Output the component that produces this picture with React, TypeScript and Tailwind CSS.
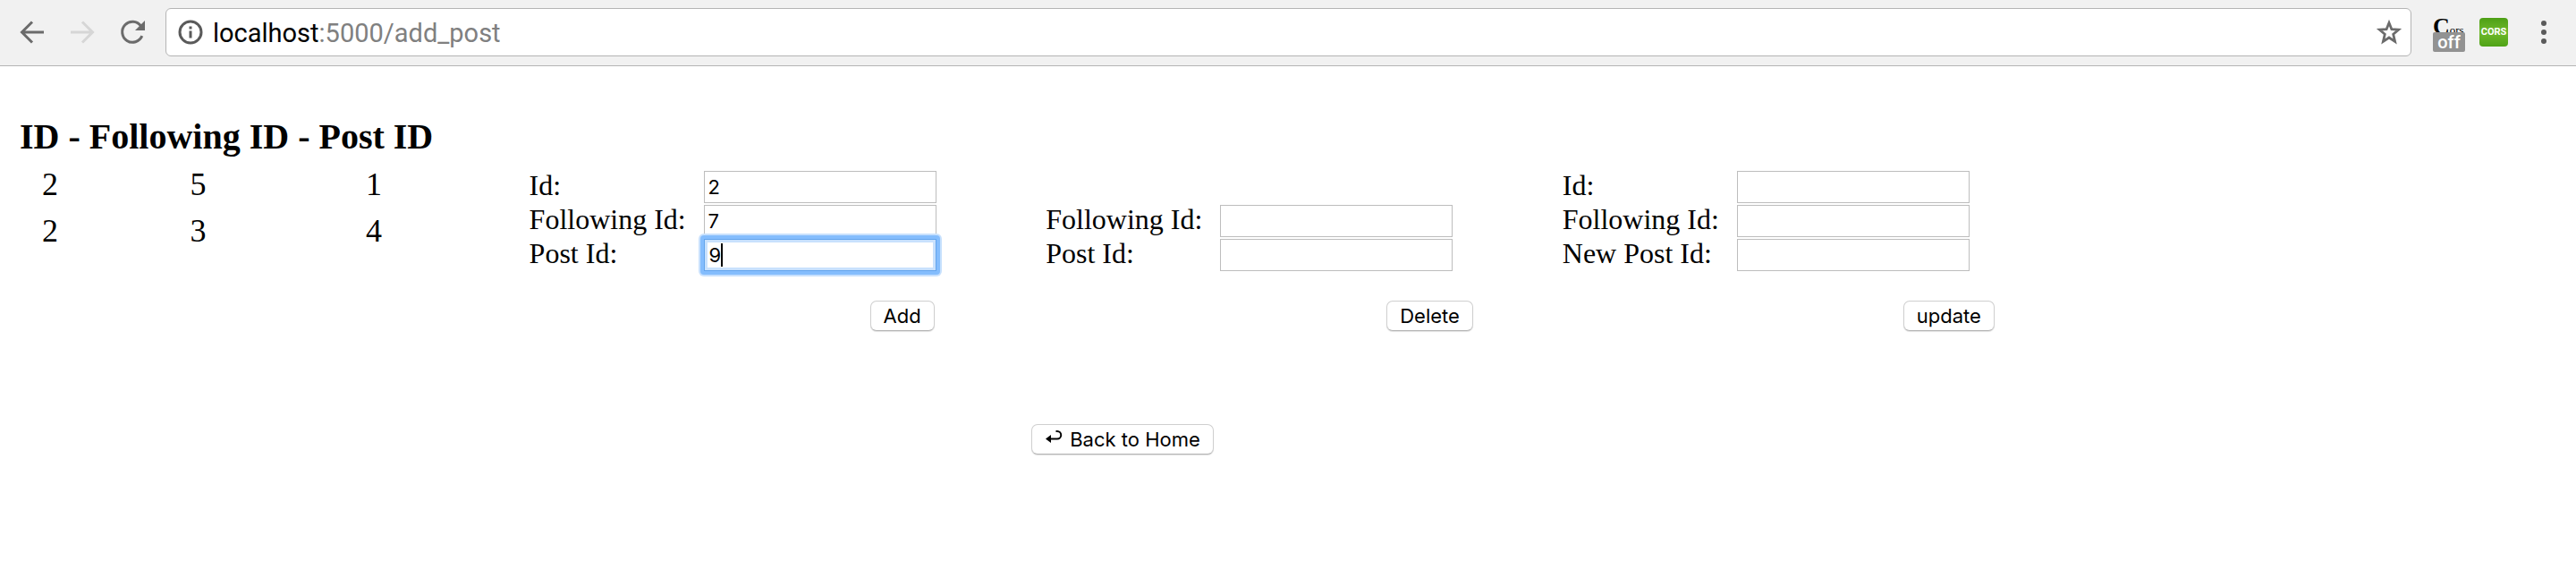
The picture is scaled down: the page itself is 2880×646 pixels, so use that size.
import React from "react";

type Field = { id: string; label: string; value?: string; focused?: boolean };

const rows = [
  [2, 5, 1],
  [2, 3, 4],
];

const addFields: Field[] = [
  { id: "add-id", label: "Id:", value: "2" },
  { id: "add-following", label: "Following Id:", value: "7" },
  { id: "add-post", label: "Post Id:", value: "9", focused: true },
];

const deleteFields: Field[] = [
  { id: "delete-following", label: "Following Id:" },
  { id: "delete-post", label: "Post Id:" },
];

const updateFields: Field[] = [
  { id: "update-id", label: "Id:" },
  { id: "update-following", label: "Following Id:" },
  { id: "update-post", label: "New Post Id:" },
];

const buttonClass =
  "flex h-[34px] items-center rounded-[7px] border border-[#cfcfcf] border-b-[#b4b4b4] bg-white px-[14px] font-[Inter,sans-serif] text-[22px] leading-8 text-black shadow-[0_1px_1px_rgba(0,0,0,0.12)]";

function FieldRow({ id, label, value = "", focused = false }: Field) {
  return (
    <div className="flex items-start">
      <label htmlFor={id} className="w-[195px] shrink-0 text-[32px] leading-8">
        {label}
      </label>
      <div className="relative">
        {focused && (
          <span className="absolute -inset-1 rounded-[4px] bg-[#84bdfd] shadow-[0_0_0_2px_#c8e1fd]" />
        )}
        <input
          id={id}
          type="text"
          defaultValue={value}
          className={
            focused
              ? "relative block h-9 w-[260px] border border-[#62a4ec] bg-white px-[5px] font-[Inter,sans-serif] text-[22px] text-black shadow-[inset_0_0_0_3px_#c8e1fd] outline-none"
              : "block h-9 w-[260px] border border-[#bdbdbd] bg-white px-1 font-[Inter,sans-serif] text-[22px] text-black outline-none"
          }
        />
        {focused && <span className="absolute left-[19px] top-[5px] h-[26px] w-[2px] bg-black" />}
      </div>
    </div>
  );
}

function PostForm({ fields, action }: { fields: Field[]; action: string }) {
  return (
    <form
      className="flex w-1/5 shrink-0 flex-col justify-end pt-[11px]"
      onSubmit={(e) => e.preventDefault()}
    >
      <div className="flex flex-col gap-[2px]">
        {fields.map((f) => (
          <FieldRow key={f.id} {...f} />
        ))}
      </div>
      <div className="mt-[33px] flex pl-[381px]">
        <button type="submit" className={buttonClass}>
          {action}
        </button>
      </div>
    </form>
  );
}

function BrowserBar() {
  return (
    <header className="flex h-[74px] items-center border-b border-[#b4b4b4] bg-[#f1f1f1] pb-[1px] font-[Roboto,sans-serif]">
      <div className="flex items-center gap-6 pl-5">
        <button type="button" aria-label="Back" className="text-[#6b6b6b]">
          <svg viewBox="0 0 32 32" className="block size-8" fill="none" stroke="currentColor" strokeWidth="3">
            <path d="M29 16H5M16 4.500L4.500 16L16 27.500" />
          </svg>
        </button>
        <button type="button" aria-label="Forward" className="text-[#d6d6d6]">
          <svg viewBox="0 0 32 32" className="block size-8" fill="none" stroke="currentColor" strokeWidth="3">
            <path d="M3 16H27M16 4.500L27.500 16L16 27.500" />
          </svg>
        </button>
        <button type="button" aria-label="Reload" className="text-[#6b6b6b]">
          <svg viewBox="0 0 32 32" className="block size-8" fill="none">
            <path d="M25.500 9A11.500 11.500 0 1 0 26.800 20.200" stroke="currentColor" strokeWidth="3" />
            <path d="M30 3V14H19Z" fill="currentColor" />
          </svg>
        </button>
      </div>
      <div className="ml-[21px] flex h-[54px] flex-1 items-center rounded-[6px] border border-[#b4b4b4] bg-white">
        <svg viewBox="0 0 28 28" className="ml-[13px] size-7 shrink-0" fill="none">
          <circle cx="14" cy="14" r="12" stroke="#5a5a5a" strokeWidth="3" />
          <path d="M14 12.500V20.500M14 7.500V10.500" stroke="#5a5a5a" strokeWidth="3" />
        </svg>
        <div className="ml-[11px] flex-1 pt-[2px] text-[29px] leading-9 text-[#808080]">
          <span className="text-black">localhost</span>:5000/add_post
        </div>
        <button type="button" aria-label="Bookmark" className="mr-[9px]">
          <svg viewBox="0 0 30 30" className="block size-[30px]" fill="none" stroke="#6b6b6b" strokeWidth="2.8">
            <path d="M15 4.500L17.900 11.700L25.600 12.200L19.700 17.200L21.600 25.300L15 21L8.400 25.300L10.300 17.200L4.400 12.200L12.100 11.700Z" />
          </svg>
        </button>
      </div>
      <div className="flex items-center">
        <div className="relative ml-6 h-12 w-9 pt-1">
          <span className="block whitespace-nowrap font-['Liberation_Serif',serif] leading-[28px] text-black">
            <span className="text-[26px] font-bold">C</span>
            <span className="text-[13px]">ors</span>
          </span>
          <span className="absolute bottom-0.5 left-0 flex h-[22px] w-9 items-center justify-center rounded-[2px] bg-[#929292] text-[20px] leading-[22px] font-medium text-white">
            off
          </span>
        </div>
        <div className="ml-4 flex size-8 items-center justify-center rounded-[4px] bg-linear-to-b from-[#4d9f15] via-[#6fb92a] to-[#4fa317] text-[11px] font-bold text-white">
          CORS
        </div>
        <button type="button" aria-label="Menu" className="mr-[26px] ml-[30px]">
          <svg viewBox="0 0 20 30" className="block h-[30px] w-5" fill="#5a5a5a">
            <circle cx="10" cy="5" r="3" />
            <circle cx="10" cy="15" r="3" />
            <circle cx="10" cy="25" r="3" />
          </svg>
        </button>
      </div>
    </header>
  );
}

export default function App() {
  return (
    <div className="min-h-screen bg-white font-['Liberation_Serif',serif] text-black">
      <BrowserBar />
      <main className="pt-[56px] pr-[18px] pl-[14px]">
        <h1 className="pl-2 text-[40px] leading-[46px] font-bold">ID - Following ID - Post ID</h1>
        <div className="mt-1 flex gap-2">
          <section className="w-1/5 shrink-0">
            <table className="text-center text-[36px] leading-[52px]">
              <tbody>
                {rows.map((r, i) => (
                  <tr key={i}>
                    <td className="w-[84px] p-0">{r[0]}</td>
                    <td className="w-[247px] p-0">{r[1]}</td>
                    <td className="w-[146px] p-0">{r[2]}</td>
                  </tr>
                ))}
              </tbody>
            </table>
          </section>
          <PostForm fields={addFields} action="Add" />
          <PostForm fields={deleteFields} action="Delete" />
          <PostForm fields={updateFields} action="update" />
        </div>
        <div className="mt-[104px] pl-[40%]">
          <button type="button" className={buttonClass}>
            <svg viewBox="0 0 20 18" className="mr-2 mb-1 h-[18px] w-5" fill="none">
              <path d="M5 10.500H14A4 4 0 0 0 14 2H12.500" stroke="#000" strokeWidth="2" />
              <path d="M1 10.500L7 6V15Z" fill="#000" />
            </svg>
            Back to Home
          </button>
        </div>
      </main>
    </div>
  );
}
